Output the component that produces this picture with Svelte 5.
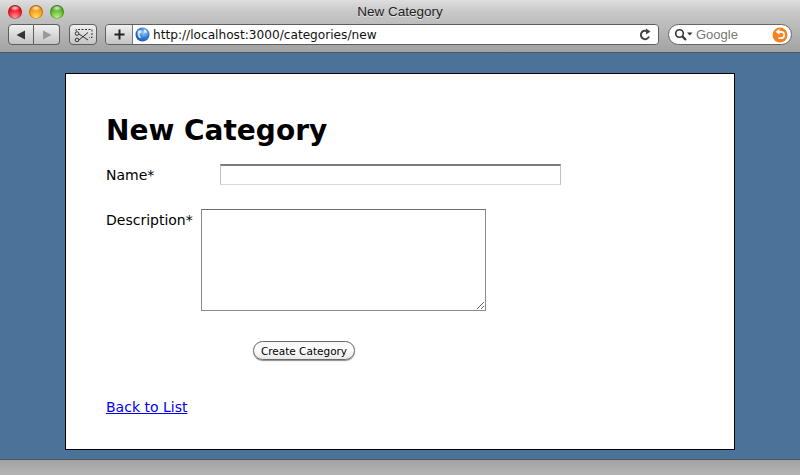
<script>
  let title = 'New Category';
</script>

<div class="window">
  <header class="chrome">
    <div class="titlebar">
      <div class="lights">
        <span class="light red"></span>
        <span class="light amber"></span>
        <span class="light green"></span>
      </div>
      <div class="wintitle">{title}</div>
    </div>
    <div class="toolbar">
      <div class="btngroup nav">
        <button class="tb" aria-label="Back">
          <svg width="12" height="12" viewBox="0 0 12 12"><path d="M10 1.500v9L1.500 6z" fill="#333" /></svg>
        </button>
        <button class="tb" aria-label="Forward">
          <svg width="12" height="12" viewBox="0 0 12 12"><path d="M2 1.500v9L10.500 6z" fill="#999" /></svg>
        </button>
      </div>
      <button class="tb clip" aria-label="Snippet">
        <svg width="20" height="15" viewBox="0 0 20 15" fill="none" stroke="#333">
          <path d="M3 4V2.500h16v8h-3" stroke-dasharray="2 1.500" />
          <path d="M6 7l9 6M6 13l9-7.500" stroke-width="1" />
          <circle cx="4" cy="6.500" r="1.800" />
          <circle cx="4" cy="13" r="1.800" />
        </svg>
      </button>
      <div class="address">
        <button class="plus" aria-label="Add">
          <svg width="13" height="13" viewBox="0 0 13 13"><path d="M6.500 1.500v10M1.500 6.500h10" stroke="#222" stroke-width="2" /></svg>
        </button>
        <div class="url">
          <svg class="globe" width="15" height="15" viewBox="0 0 16 16">
            <defs>
              <radialGradient id="g" cx="0.6" cy="0.35" r="0.8">
                <stop offset="0" stop-color="#a8d0f6" />
                <stop offset="0.5" stop-color="#2f7cd6" />
                <stop offset="1" stop-color="#0f4a9c" />
              </radialGradient>
            </defs>
            <circle cx="8" cy="8" r="7.500" fill="url(#g)" />
            <path d="M3 4c2-1 4-1 4 1s-2 1-2 3 2 2 1 4c-2 0-4-3-3-8zM10 2c2 1 3 3 3 4l-3 0c-1-1 0-3 0-4z" fill="#eef5fc" opacity="0.85" />
          </svg>
          <span class="urltext">http://localhost:3000/categories/new</span>
          <svg class="reload" width="14" height="14" viewBox="0 0 14 14" fill="none">
            <path d="M11 8.500A4.200 4.200 0 1 1 9.500 3.500" stroke="#444" stroke-width="2" />
            <path d="M8 0.500l4.500 3L8 6.500z" fill="#444" />
          </svg>
        </div>
      </div>
      <div class="search">
        <svg width="20" height="14" viewBox="0 0 20 14" fill="none">
          <circle cx="5.500" cy="5.500" r="3.800" stroke="#333" stroke-width="1.600" />
          <path d="M8.500 8.500l3.500 3.500" stroke="#333" stroke-width="2.200" />
          <path d="M13 4.500h5.500l-2.750 3z" fill="#333" />
        </svg>
        <span class="placeholder">Google</span>
        <span class="snapback">
          <svg width="16" height="16" viewBox="0 0 16 16" fill="none">
            <circle cx="8" cy="8" r="7.500" fill="#f5821f" />
            <path d="M7 4.800h2a3.200 3.200 0 0 1 0 6.400H6.500" stroke="#fff" stroke-width="1.700" />
            <path d="M7.500 1.800v6L3.500 4.800z" fill="#fff" />
          </svg>
        </span>
      </div>
    </div>
  </header>

  <main class="viewport">
    <section class="page">
      <h1>{title}</h1>
      <form on:submit|preventDefault>
        <div class="field name">
          <label for="name">Name*</label>
          <input id="name" type="text" />
        </div>
        <div class="field desc">
          <label for="description">Description*</label>
          <textarea id="description"></textarea>
        </div>
        <div class="actions">
          <button class="submit" type="submit">Create Category</button>
        </div>
      </form>
      <a href="#list" class="back">Back to List</a>
    </section>
  </main>

  <footer class="statusbar"></footer>
</div>

<style>
  :global(body) {
    margin: 0;
    overflow: hidden;
  }

  .window {
    display: flex;
    flex-direction: column;
    height: 475px;
    width: 800px;
    font-family: "DejaVu Sans", Verdana, sans-serif;
  }

  .chrome {
    height: 53px;
    flex: none;
    box-sizing: border-box;
    background: linear-gradient(#dedede 0, #c8c8c8 12px, #a2a2a2 100%);
    border-bottom: 1px solid #555;
    box-shadow: 0 1px 0 #6f8195;
  }

  .titlebar {
    display: flex;
    align-items: center;
    height: 23px;
    position: relative;
  }

  .lights {
    display: flex;
    gap: 7px;
    padding-left: 8px;
  }

  .light {
    width: 14px;
    height: 14px;
    border-radius: 50%;
    box-shadow: inset 0 0 0 1px rgba(0, 0, 0, 0.25);
  }

  .red {
    background:
      radial-gradient(ellipse 5px 3px at 50% 22%, rgba(255, 255, 255, 0.85), transparent),
      radial-gradient(circle at 50% 90%, #ff9a9a 0, #f01824 55%, #b80814 100%);
  }

  .amber {
    background:
      radial-gradient(ellipse 5px 3px at 50% 22%, rgba(255, 255, 255, 0.85), transparent),
      radial-gradient(circle at 50% 90%, #ffe070 0, #fb9a10 55%, #c86408 100%);
  }

  .green {
    background:
      radial-gradient(ellipse 5px 3px at 50% 22%, rgba(255, 255, 255, 0.8), transparent),
      radial-gradient(circle at 50% 90%, #c0f088 0, #5cb82c 55%, #2e8410 100%);
  }

  .wintitle {
    position: absolute;
    left: 0;
    right: 0;
    top: 3px;
    text-align: center;
    font-family: "Liberation Sans", Arial, sans-serif;
    font-size: 13.500px;
    line-height: 17px;
    color: #222;
    text-shadow: 0 1px 0 #e4e4e4;
  }

  .toolbar {
    display: flex;
    align-items: flex-start;
    padding: 1px 0 0 8px;
  }

  .tb {
    display: flex;
    align-items: center;
    justify-content: center;
    padding: 0;
    height: 21px;
    box-sizing: border-box;
    background: linear-gradient(#f0f0f0, #c4c4c4);
    border: 1px solid #5e5e5e;
    border-radius: 4px;
  }

  .btngroup {
    display: flex;
  }

  .nav .tb {
    width: 26px;
  }

  .nav .tb:first-child {
    border-radius: 4px 0 0 4px;
  }

  .nav .tb:last-child {
    border-left: 0;
    border-radius: 0 4px 4px 0;
  }

  .clip {
    width: 28px;
    margin-left: 9px;
  }

  .address {
    display: flex;
    height: 21px;
    width: 554px;
    margin-left: 8px;
    box-sizing: border-box;
    border: 1px solid #5e5e5e;
    border-radius: 4px;
    overflow: hidden;
  }

  .plus {
    display: flex;
    align-items: center;
    justify-content: center;
    width: 27px;
    padding: 0;
    border: 0;
    border-right: 1px solid #777;
    background: linear-gradient(#f0f0f0, #c4c4c4);
  }

  .url {
    flex: 1;
    display: flex;
    align-items: center;
    background: #fff;
    padding: 0 4px 0 2px;
  }

  .globe {
    flex: none;
  }

  .urltext {
    flex: 1;
    margin-left: 3px;
    font-family: "DejaVu Sans", Verdana, sans-serif;
    font-size: 12.150px;
    color: #111;
    white-space: nowrap;
  }

  .reload {
    flex: none;
    margin-right: 2px;
  }

  .search {
    display: flex;
    align-items: center;
    width: 124px;
    height: 21px;
    margin-left: 9px;
    padding: 0 3px 0 5px;
    box-sizing: border-box;
    background: #fff;
    border: 1px solid #666;
    border-radius: 11px;
  }

  .placeholder {
    flex: 1;
    margin-left: 2px;
    font-family: "Liberation Sans", Arial, sans-serif;
    font-size: 13px;
    color: #777;
  }

  .snapback {
    display: flex;
  }

  .viewport {
    flex: 1;
    padding: 20px 65px 0;
    background: #4b7299;
  }

  .page {
    height: 377px;
    box-sizing: border-box;
    padding: 39px 40px 0;
    background: #fff;
    border: 1px solid #000;
    font-size: 14px;
    color: #000;
  }

  h1 {
    margin: 0 0 15px;
    font-size: 28px;
    line-height: 36px;
    font-weight: bold;
  }

  .field {
    display: flex;
    align-items: flex-start;
  }

  label {
    flex: none;
    padding-top: 1px;
    line-height: 20px;
  }

  .name label {
    width: 114px;
  }

  .desc {
    margin-top: 24px;
  }

  .desc label {
    width: 95px;
  }

  input {
    width: 341px;
    height: 21px;
    box-sizing: border-box;
    padding: 0;
    border: 1px solid #dadada;
    border-top: 2px solid #7c7c7c;
    border-left-color: #c0c0c0;
    border-right-color: #c0c0c0;
    background: #fff;
  }

  textarea {
    display: block;
    width: 285px;
    height: 102px;
    box-sizing: border-box;
    padding: 0;
    margin: 0;
    border: 1px solid #8c8c8c;
    border-top-color: #6e6e6e;
    background: #fff;
  }

  .actions {
    padding: 30px 0 0 147px;
  }

  .submit {
    display: block;
    width: 102px;
    height: 19px;
    padding: 0;
    box-sizing: border-box;
    border: 1px solid #6a6a6a;
    border-radius: 10px;
    background: linear-gradient(#f6f6f6, #fff 40%, #e8e8e8);
    box-shadow: 0 1px 1px rgba(0, 0, 0, 0.45);
    font-family: "DejaVu Sans", Verdana, sans-serif;
    font-size: 10.500px;
    line-height: 16px;
    color: #000;
  }

  .back {
    display: inline-block;
    margin-top: 37px;
    line-height: 20px;
    font-size: 14px;
    color: #0000ee;
  }

  .statusbar {
    height: 16px;
    flex: none;
    box-sizing: border-box;
    background: linear-gradient(#a2a2a2, #b4b4b4);
    border-top: 1px solid #555;
  }
</style>
